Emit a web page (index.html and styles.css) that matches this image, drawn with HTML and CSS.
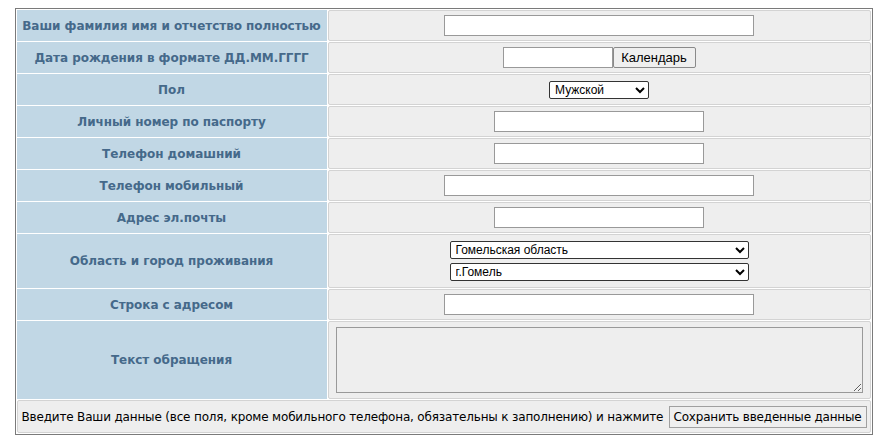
FILE: index.html
```html
<!DOCTYPE html>
<html lang="ru">
<head>
<meta charset="utf-8">
<title>Обращение</title>
<link rel="stylesheet" href="styles.css">
</head>
<body>
<form class="form">
<table class="grid">
  <colgroup>
    <col class="col-label">
    <col class="col-field">
  </colgroup>
  <tr>
    <td class="label">Ваши фамилия имя и отчетство полностью</td>
    <td class="field"><input type="text" class="in in-long"></td>
  </tr>
  <tr>
    <td class="label">Дата рождения в формате ДД.ММ.ГГГГ</td>
    <td class="field"><span class="pair"><input type="text" class="in in-date"><button type="button" class="btn">Календарь</button></span></td>
  </tr>
  <tr>
    <td class="label">Пол</td>
    <td class="field"><select class="sel sel-sex"><option>Мужской</option><option>Женский</option></select></td>
  </tr>
  <tr>
    <td class="label">Личный номер по паспорту</td>
    <td class="field"><input type="text" class="in in-mid"></td>
  </tr>
  <tr>
    <td class="label">Телефон домашний</td>
    <td class="field"><input type="text" class="in in-mid"></td>
  </tr>
  <tr>
    <td class="label">Телефон мобильный</td>
    <td class="field"><input type="text" class="in in-long"></td>
  </tr>
  <tr>
    <td class="label">Адрес эл.почты</td>
    <td class="field"><input type="text" class="in in-mid"></td>
  </tr>
  <tr>
    <td class="label">Область и город проживания</td>
    <td class="field field-stack">
      <div class="stack">
        <select class="sel sel-wide"><option>Гомельская область</option></select>
        <select class="sel sel-wide"><option>г.Гомель</option></select>
      </div>
    </td>
  </tr>
  <tr>
    <td class="label">Строка с адресом</td>
    <td class="field"><input type="text" class="in in-long"></td>
  </tr>
  <tr>
    <td class="label label-tall">Текст обращения</td>
    <td class="field field-text"><textarea class="area"></textarea></td>
  </tr>
  <tr>
    <td class="footer" colspan="2">
      <div class="footer-row">
        <span class="note">Введите Ваши данные (все поля, кроме мобильного телефона, обязательны к заполнению) и нажмите</span>
        <button type="button" class="btn btn-save">Сохранить введенные данные</button>
      </div>
    </td>
  </tr>
</table>
</form>
</body>
</html>
```

FILE: styles.css
```css
html, body {
  margin: 0;
  padding: 0;
  background: #ffffff;
}
body {
  margin: 8px;
  font-family: "DejaVu Sans", Verdana, sans-serif;
}
.form {
  margin: 0;
}
.grid {
  width: 858px;
  margin: 0 auto;
  border: 1px solid #7a7a7a;
  border-spacing: 1px;
  background: #ffffff;
  table-layout: fixed;
}
.col-label {
  width: 310px;
}
.label {
  padding: 0 1px;
  background: #c1d7e5;
  color: #45698a;
  font-family: "DejaVu Sans", Verdana, sans-serif;
  font-size: 12px;
  font-weight: bold;
  text-align: center;
  vertical-align: middle;
  white-space: nowrap;
  letter-spacing: -0.05px;
}
.field {
  background: #eeeeee;
  border: 1px solid #d3d3d3;
  border-radius: 2px;
  padding: 4px 7px;
  text-align: center;
  vertical-align: middle;
  height: 21px;
}
.pair {
  display: inline-flex;
  align-items: center;
  vertical-align: middle;
}
.in {
  box-sizing: border-box;
  height: 21px;
  margin: 0;
  padding: 1px 2px;
  border: 1px solid #999999;
  background: #ffffff;
  font-family: "Liberation Sans", Arial, sans-serif;
  font-size: 13px;
  vertical-align: middle;
}
.in-long { width: 310px; }
.in-mid { width: 210px; }
.in-date { width: 110px; }
.btn {
  box-sizing: border-box;
  height: 21px;
  margin: 0;
  padding: 0 6px;
  border: 1px solid #8a8a8a;
  border-radius: 2px;
  background: #efefef;
  color: #000000;
  font-family: "Liberation Sans", Arial, sans-serif;
  font-size: 13px;
  vertical-align: middle;
  white-space: nowrap;
}
.pair .btn {
  width: 83px;
}
.sel {
  box-sizing: border-box;
  height: 18px;
  margin: 0;
  padding: 0 0 0 1px;
  border: 1px solid #333333;
  border-radius: 2px;
  background: #ffffff;
  color: #000000;
  font-family: "Liberation Sans", Arial, sans-serif;
  font-size: 12px;
  vertical-align: middle;
}
.sel-sex { width: 100px; }
.sel-wide { width: 299px; }
.field-stack {
  padding: 6px 7px;
}
.stack {
  display: flex;
  flex-direction: column;
  align-items: center;
  gap: 4px;
}
.field-text {
  padding: 5px 7px;
  height: 65px;
}
.area {
  display: block;
  box-sizing: border-box;
  width: 100%;
  height: 66px;
  margin: 0;
  border: 1px solid #999999;
  background: #eeeeee;
  resize: both;
}
.footer {
  background: #eeeeee;
  border: 1px solid #d3d3d3;
  border-radius: 2px;
  padding: 5px 3px 4px 4px;
}
.footer-row {
  display: flex;
  align-items: center;
  justify-content: space-between;
}
.note {
  font-family: "DejaVu Sans", Verdana, sans-serif;
  font-size: 12px;
  color: #000000;
  white-space: nowrap;
  letter-spacing: -0.17px;
}
.btn-save {
  flex: none;
  width: 198px;
  height: 22px;
  padding: 0 2px;
  font-family: "DejaVu Sans", Verdana, sans-serif;
  font-size: 12px;
  letter-spacing: -0.2px;
  border: 1px solid #a0a0a0;
  border-radius: 0;
}
```
